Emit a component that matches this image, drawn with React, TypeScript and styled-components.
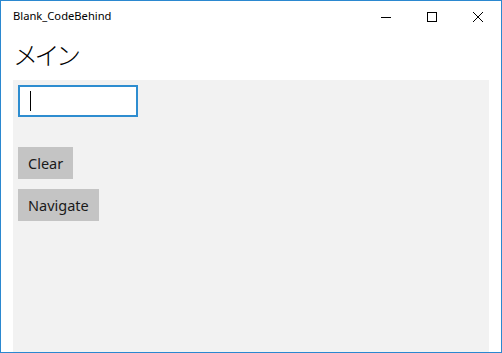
import React from 'react';
import styled, { createGlobalStyle } from 'styled-components';

const GlobalStyle = createGlobalStyle`
  html, body {
    margin: 0;
    padding: 0;
    background: #ffffff;
  }
  body {
    font-family: 'Segoe UI', 'Noto Sans', 'Noto Sans CJK JP', sans-serif;
  }
`;

const Window = styled.div`
  box-sizing: border-box;
  width: 502px;
  height: 353px;
  border: 1px solid #2b88d0;
  display: flex;
  flex-direction: column;
  background: #ffffff;
  overflow: hidden;
`;

const TitleBar = styled.div`
  height: 31px;
  display: flex;
  align-items: center;
  flex-shrink: 0;
`;

const Title = styled.div`
  flex: 1;
  padding-left: 12px;
  font-size: 11.2px;
  color: #000;
  margin-top: -2px;
`;

const CaptionButton = styled.div`
  width: 46px;
  height: 31px;
  display: flex;
  align-items: center;
  justify-content: center;
`;

const PageHeader = styled.h1`
  margin: 6px 0 0 12px;
  height: 42px;
  font-family: 'Noto Sans CJK JP', sans-serif;
  font-weight: 300;
  font-size: 25px;
  letter-spacing: -3.5px;
  line-height: 32px;
  color: #000;
`;

const Panel = styled.div`
  flex: 1;
  margin: 0 12px;
  background: #f2f2f2;
  padding: 5px 5px;
  display: flex;
  flex-direction: column;
  align-items: flex-start;
`;

const TextBox = styled.div`
  box-sizing: border-box;
  width: 120px;
  height: 32px;
  border: 2px solid #2e8dd0;
  background: #fff;
  display: flex;
  align-items: center;
  padding-left: 10px;
`;

const Caret = styled.div`
  width: 1px;
  height: 20px;
  background: #000;
`;

const Button = styled.button<{ $top: number }>`
  box-sizing: border-box;
  margin-top: ${({ $top }) => $top}px;
  height: 32px;
  padding: 0 10px;
  border: none;
  background: #c4c4c4;
  font-family: 'Segoe UI', 'Noto Sans', sans-serif;
  font-size: 14.5px;
  color: #1a1a1a;
  line-height: 32px;
`;

export default function App() {
  return (
    <>
      <GlobalStyle />
      <Window>
        <TitleBar>
          <Title>Blank_CodeBehind</Title>
          <CaptionButton>
            <svg width="10" height="10" viewBox="0 0 10 10">
              <path d="M0 5.5 H10" stroke="#000" strokeWidth="1" />
            </svg>
          </CaptionButton>
          <CaptionButton>
            <svg width="10" height="10" viewBox="0 0 10 10">
              <rect x="0.5" y="0.5" width="9" height="9" fill="none" stroke="#000" strokeWidth="1" />
            </svg>
          </CaptionButton>
          <CaptionButton>
            <svg width="10" height="10" viewBox="0 0 10 10">
              <path d="M0 0 L10 10 M10 0 L0 10" stroke="#000" strokeWidth="1" />
            </svg>
          </CaptionButton>
        </TitleBar>
        <PageHeader>メイン</PageHeader>
        <Panel>
          <TextBox>
            <Caret />
          </TextBox>
          <Button $top={30}>Clear</Button>
          <Button $top={10}>Navigate</Button>
        </Panel>
      </Window>
    </>
  );
}
